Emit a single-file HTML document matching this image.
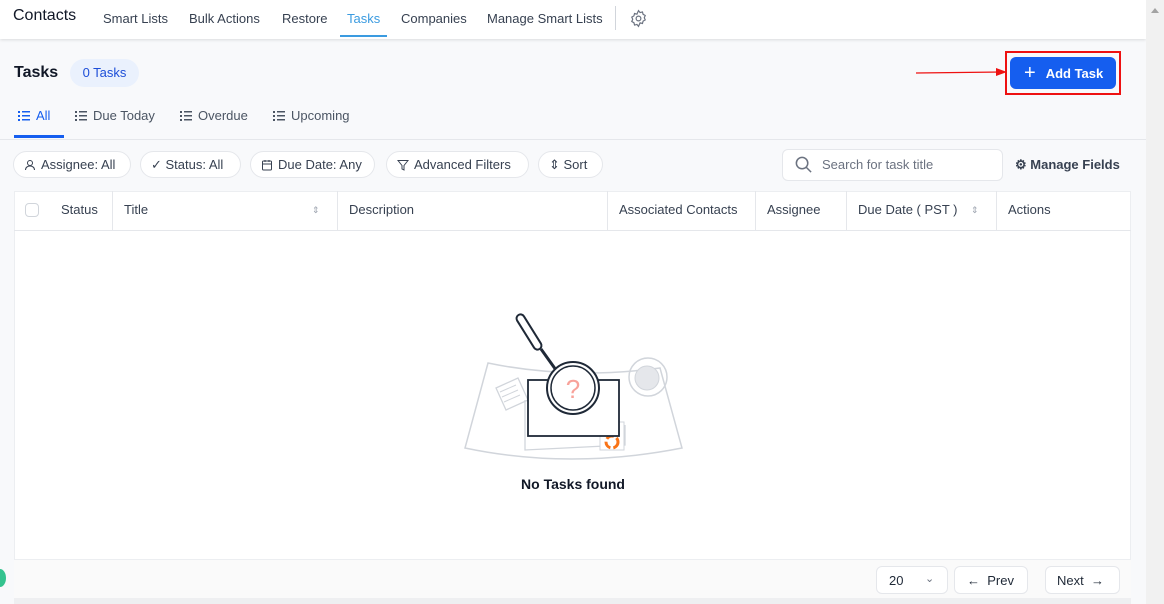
<!DOCTYPE html>
<html><head><style>
*{box-sizing:border-box;margin:0;padding:0}
body{width:1164px;height:604px;overflow:hidden;background:#f8f9fb;font-family:"Liberation Sans",Arial,sans-serif;position:relative;color:#1f2937}
.abs{position:absolute}
.hdr{left:0;top:0;width:1146px;height:39px;background:#fff;box-shadow:0 1px 3px rgba(0,0,0,.12)}
.nav{font-size:13px;color:#374151;top:11px}
.sb{left:1146px;top:0;width:18px;height:604px;background:#f1f1f1}
.pill{height:27px;border:1px solid #e5e7eb;border-radius:14px;background:#fff;font-size:13px;color:#374151;display:flex;align-items:center;padding:0 10px;gap:5px;top:151px}
.th{top:202px;font-size:13px;color:#374151}
.vl{top:191px;width:1px;height:40px;background:#e5e7eb}
.tab{top:108px;font-size:13px;color:#4b5563;display:flex;align-items:center;gap:6px}
.li{display:inline-block;width:12px;height:10px;background:
 linear-gradient(currentColor,currentColor) 0 0/2px 2px no-repeat,
 linear-gradient(currentColor,currentColor) 0 4px/2px 2px no-repeat,
 linear-gradient(currentColor,currentColor) 0 8px/2px 2px no-repeat,
 linear-gradient(currentColor,currentColor) 4px 0/8px 1.5px no-repeat,
 linear-gradient(currentColor,currentColor) 4px 4px/8px 1.5px no-repeat,
 linear-gradient(currentColor,currentColor) 4px 8px/8px 1.5px no-repeat}
</style></head><body>
<div class="abs hdr"></div>
<div class="abs" style="left:13px;top:7px;font-size:16px;color:#111827">Contacts</div>
<div class="abs nav" style="left:103px">Smart Lists</div>
<div class="abs nav" style="left:189px">Bulk Actions</div>
<div class="abs nav" style="left:282px">Restore</div>
<div class="abs nav" style="left:347px;color:#3b9be0">Tasks</div>
<div class="abs" style="left:340px;top:35px;width:47px;height:2px;background:#3b9be0"></div>
<div class="abs nav" style="left:401px">Companies</div>
<div class="abs nav" style="left:487px">Manage Smart Lists</div>
<div class="abs" style="left:615px;top:6px;width:1px;height:24px;background:#d1d5db"></div>
<svg class="abs" style="left:629px;top:9px" width="19" height="19" viewBox="0 0 24 24" fill="none" stroke="#6b7280" stroke-width="1.5"><circle cx="12" cy="12" r="3"/><path d="M12 2l2 2.5 3-.8.8 3 2.7 1.5-1.2 2.8 1.2 2.8-2.7 1.5-.8 3-3-.8L12 22l-2-2.5-3 .8-.8-3-2.7-1.5L4.7 13 3.5 10.2l2.7-1.5.8-3 3 .8z"/></svg>
<div class="abs sb"><div class="abs" style="left:5px;top:8px;border:4px solid transparent;border-bottom:5px solid #a3a3a3;border-top:0"></div></div>

<div class="abs" style="left:14px;top:64px;font-size:16px;font-weight:bold;color:#111827">Tasks</div>
<div class="abs" style="left:70px;top:59px;width:69px;height:28px;border-radius:14px;background:#eaf1fd;color:#1d4ed8;font-size:13px;text-align:center;line-height:28px">0 Tasks</div>

<svg class="abs" style="left:916px;top:67px" width="92" height="10"><line x1="0" y1="6" x2="86" y2="5" stroke="#e11" stroke-width="1.3"/><path d="M80 1l11 4-11 4z" fill="#e11"/></svg>
<div class="abs" style="left:1005px;top:51px;width:116px;height:44px;border:2px solid #e11"></div>
<div class="abs" style="left:1010px;top:57px;width:106px;height:32px;background:#155eef;border-radius:6px;color:#fff;font-size:13px;font-weight:bold;display:flex;align-items:center;padding-left:14px;gap:10px"><span style="font-size:20px;font-weight:normal;line-height:1">+</span>Add Task</div>

<div class="abs tab" style="left:18px;color:#155eef"><span class="li"></span>All</div>
<div class="abs" style="left:14px;top:135px;width:50px;height:3px;background:#155eef"></div>
<div class="abs tab" style="left:75px"><span class="li"></span>Due Today</div>
<div class="abs tab" style="left:180px"><span class="li"></span>Overdue</div>
<div class="abs tab" style="left:273px"><span class="li"></span>Upcoming</div>
<div class="abs" style="left:0;top:139px;width:1146px;height:1px;background:#e5e7eb"></div>

<div class="abs pill" style="left:13px;width:118px"><svg width="12" height="12" viewBox="0 0 12 12" fill="none" stroke="#374151"><circle cx="6" cy="4" r="2.5"/><path d="M1.5 11c0-2.5 2-4 4.5-4s4.5 1.5 4.5 4"/></svg>Assignee: All</div>
<div class="abs pill" style="left:140px;width:101px">✓ Status: All</div>
<div class="abs pill" style="left:250px;width:125px"><svg width="12" height="12" viewBox="0 0 12 12" fill="none" stroke="#374151"><rect x="1.5" y="2" width="9" height="9" rx="1"/><path d="M1.5 5h9M4 1v2M8 1v2"/></svg>Due Date: Any</div>
<div class="abs pill" style="left:386px;width:143px"><svg width="12" height="12" viewBox="0 0 12 12" fill="none" stroke="#374151"><path d="M1 1.5h10L7 6.5V11L5 10V6.5z"/></svg>Advanced Filters</div>
<div class="abs pill" style="left:538px;width:65px">⇕ Sort</div>

<div class="abs" style="left:782px;top:149px;width:221px;height:32px;background:#fff;border:1px solid #e5e7eb;border-radius:6px"></div>
<svg class="abs" style="left:794px;top:155px" width="19" height="19" viewBox="0 0 20 20" fill="none" stroke="#6b7280" stroke-width="1.6"><circle cx="8.5" cy="8.5" r="6"/><path d="M13 13l5 5"/></svg>
<div class="abs" style="left:822px;top:157px;font-size:13px;color:#6b7280">Search for task title</div>
<div class="abs" style="left:1015px;top:157px;font-size:13px;font-weight:bold;color:#374151">⚙ Manage Fields</div>

<div class="abs" style="left:14px;top:191px;width:1117px;height:408px;background:#fff;border:1px solid #eceef1"></div>
<div class="abs" style="left:14px;top:230px;width:1117px;height:1px;background:#e5e7eb"></div>
<div class="abs" style="left:14px;top:559px;width:1117px;height:40px;background:#fafafa;border-top:1px solid #eceef1"></div>
<div class="abs" style="left:14px;top:598px;width:1117px;height:6px;background:#eeeff1"></div>
<div class="abs" style="left:25px;top:203px;width:14px;height:14px;border:1px solid #d1d5db;border-radius:4px"></div>
<div class="abs th" style="left:61px">Status</div>
<div class="abs th" style="left:124px">Title</div>
<div class="abs th" style="left:312px;font-size:9px;color:#9ca3af;top:205px">⇕</div>
<div class="abs th" style="left:349px">Description</div>
<div class="abs th" style="left:619px">Associated Contacts</div>
<div class="abs th" style="left:767px">Assignee</div>
<div class="abs th" style="left:858px">Due Date ( PST )</div>
<div class="abs th" style="left:971px;font-size:9px;color:#9ca3af;top:205px">⇕</div>
<div class="abs th" style="left:1008px">Actions</div>
<div class="abs vl" style="left:112px"></div><div class="abs vl" style="left:337px"></div><div class="abs vl" style="left:607px"></div><div class="abs vl" style="left:755px"></div><div class="abs vl" style="left:846px"></div><div class="abs vl" style="left:996px"></div>

<svg class="abs" style="left:440px;top:300px" width="260" height="170" viewBox="0 0 260 170" fill="none">
<path d="M48 63Q130 80 220 68L242 148Q130 170 25 148Z" stroke="#d1d5db" stroke-width="1.5"/>
<circle cx="208" cy="77" r="19" stroke="#d1d5db" stroke-width="1.5"/><circle cx="207" cy="78" r="12" fill="#e5e7eb" stroke="#d1d5db"/>
<path d="M56 88l22-10 10 22-22 10z" stroke="#d1d5db" stroke-width="1.3"/>
<path d="M60 92l16-7M62 97l16-7M64 102l16-7" stroke="#d1d5db"/>
<path d="M85 100v50l100-5v-20" stroke="#d1d5db" stroke-width="1.3"/>
<rect x="160" y="122" width="24" height="28" fill="#fff" stroke="#d1d5db"/>
<circle cx="172" cy="142" r="6" stroke="#f97316" stroke-width="3" stroke-dasharray="8 3"/>
<rect x="88" y="80" width="91" height="56" fill="#fff" stroke="#1f2937" stroke-width="1.8"/>
<rect x="85" y="12" width="8" height="40" rx="4" transform="rotate(-32 89 32)" stroke="#1f2937" stroke-width="2" fill="#fff"/>
<path d="M101 49l15 21" stroke="#1f2937" stroke-width="3"/>
<circle cx="133" cy="88" r="26" fill="#fff" stroke="#1f2937" stroke-width="2"/><circle cx="133" cy="88" r="22" stroke="#1f2937" stroke-width="1.5"/>
<text x="133" y="98" font-size="26" fill="#f8a29a" text-anchor="middle" font-family="Liberation Sans">?</text>
</svg>
<div class="abs" style="left:0;width:1146px;top:476px;text-align:center;font-size:14px;font-weight:bold;color:#111827">No Tasks found</div>

<div class="abs" style="left:876px;top:566px;width:72px;height:28px;border:1px solid #e5e7eb;border-radius:6px;background:#fff;font-size:13px;padding:6px 0 0 12px">20<span style="position:absolute;left:48px;top:5px;color:#6b7280;font-size:11px">⌄</span></div>
<div class="abs" style="left:954px;top:566px;width:74px;height:28px;border:1px solid #e5e7eb;border-radius:6px;background:#fff;font-size:13px;padding:6px 0 0 12px">← &nbsp;Prev</div>
<div class="abs" style="left:1045px;top:566px;width:75px;height:28px;border:1px solid #e5e7eb;border-radius:6px;background:#fff;font-size:13px;padding:6px 0 0 11px">Next &nbsp;→</div>
<div class="abs" style="left:-6px;top:569px;width:12px;height:18px;border-radius:50%;background:#34c38f"></div>
</body></html>
